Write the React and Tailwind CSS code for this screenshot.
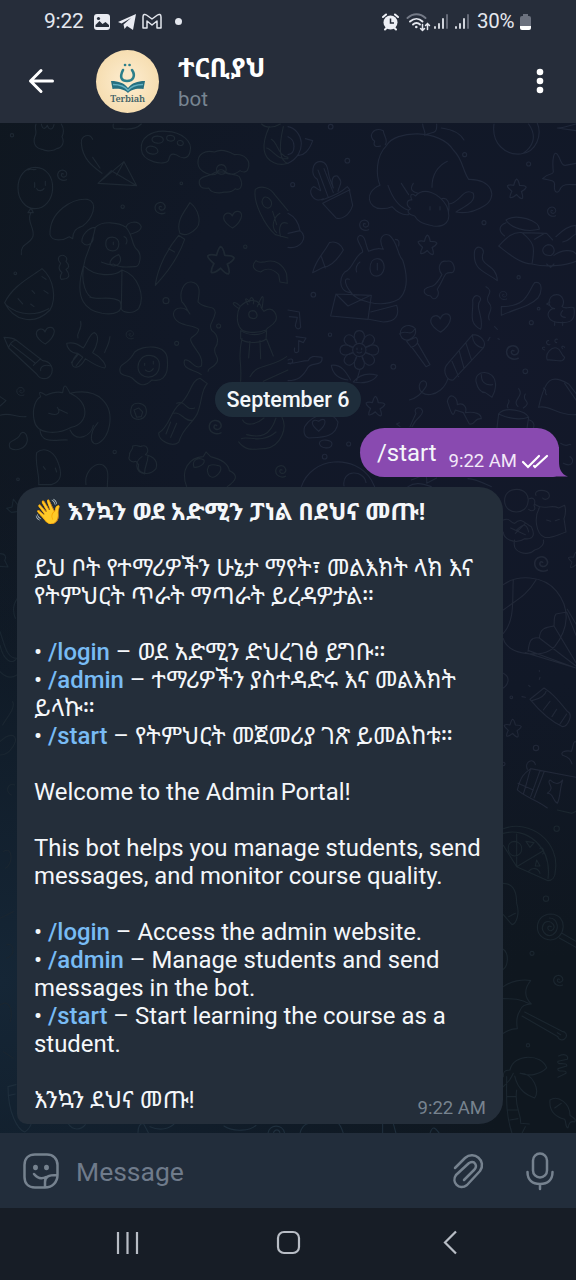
import React from "react";

const spiral = "M0 2c-5-4-9 4-3 8 8 4 17-4 12-13-6-11-24-8-26 6-1 14 14 22 27 16";
const star = "M0-26 Q5-24 8-9 Q24-9 26-4 Q24 2 13 8 Q19 24 15 27 Q9 27 0 16 Q-13 27-18 24 Q-19 18-13 7 Q-26-4-25-8 Q-20-12-8-9 Q-4-24 0-26Z";
const heart = "M0 24C-12 18-28 4-27-8c2-14 20-18 26-4 6-18 26-18 28-2 0 14-14 30-27 38Z";

function Doodles() {
  return (
    <svg className="absolute inset-0 size-full" viewBox="0 123 576 1010" fill="none" strokeWidth="3.4" strokeLinecap="round" strokeLinejoin="round">
      <g transform="translate(0 120) scale(.3333)" className="stroke-[#1e2833]">
        <path d="M108 12c-6 14 4 22-2 34-10 24 2 40 20 42 14 8 38 4 44-2 18-4 24-20 16-36 8-16 4-28-2-38M124 12c4 20 14 14 18 4 4 14 16 16 20-2M340 12c-4 20 10 14 22 14 30 4 50-2 62-14M785 12c14 14 40 10 56 0" />
        <path d="M106 142c35 0 53 30 52 64-2 34-24 60-52 60-32 0-52-30-52-62 0-34 20-62 52-62ZM84 150c10-6 16 2 24-2M104 188v14M136 184v12M110 206c4 8 16 8 22 0M92 266l-8 12h16l-6-12M92 280c-14 26 16 46 6 72-10 22-38 18-34 52" />
        <path d="M278 58c-8-20-36-12-34 12 4 46 30 66 62 90M278 112l22 32M294 190 372 125l38 72ZM294 190l40-38 76 45M372 125l-22 40" />
        <path d="M424 88c-4-34 30-58 76-54 44 2 80 30 70 62-6 24-26 20-42 8-18-6-20 6-22 16-10 20-80 6-82-32ZM456 58c2-14 34-12 34 2-2 14-34 12-34-2ZM438 88c6-16 34-10 36 6 0 12-32 12-36-6ZM500 54c0-12 24-10 24 2 0 10-24 10-24-2ZM532 68c0-10 18-8 18 2s-18 8-18-2Z" />
        <path d="M594 130c-2-30 22-40 50-34 24-14 52 4 60 8 30-4 50 20 40 42-2 12-16 12-24 6-14 12-30 12-42 8-6-14-24-14-26-2-10 16-58-2-58-28ZM598 182c6-16 22-8 50-26h28c14 10 30 4 42 14 16 28 0 44-12 36-16 18-32 6-42 12-18 2-32-2-38-14-22 4-30-6-28-22ZM664 134c14 0 18 16 12 24s-24 6-26-6c-2-10 4-18 14-18Z" />
        <path d="M850 20c-16 70-10 104 14 110M808 20c-26 56-20 94 14 108 20 10 42 2 42 2M814 58c20 10 20 50 50 54M800 84c20 6 30 36 64 32" />
        <path d="M766 208c18-14 46-4 58 16l40 48M766 208c-8 40 30 110 60 136l38 10M792 232c-16 18 8 42 20 28 10-18-10-32-20-28ZM818 274l12 40M840 280c-20 12-28 42-10 58M862 310c-20-8-28 12-20 40" />
        <path d="M150 344c-2-70 68-110 112-106 36 10 14 60-14 80-22 8-30 18-30 38l-10-6c-16 10-50 18-58-6Z" />
        <path d="M286 322c20-20 70-16 92 0 22 24 16 52 32 66 18 14 10 54-6 52-22 0-42 6-64-8-14 6-24-2-36-6M378 322c4-16 36-24 46-2-2 18-22 18-32 22M286 322c-20 0-42 24-40 44 14 18 34 6 34-16M286 322c-6 34-14 50-30 94-20 70 4 120 30 118M250 440c-30 100 10 132 56 140 40 6 66-4 54-36-30-20-64-2-90-12M254 440c30 30 90 30 112 10 50 16 70 80 50 116-20 20-50 10-52 0l2-116M330 352c24-4 28 14 26 24-2 24-34 20-38 2-2-14 2-24 12-26ZM340 366v8M372 350c8 2 12 12 6 22M356 404c-26 10-34 32-16 34 20 0 28-20 16-34Z" />
        <path d="M14 548c24-50 74-74 112-102 36 30 44 90 24 124-50 50-110 30-136-22ZM20 556c40 34 90 30 126 10M126 470l12 8M96 512l8 8M132 512l12 8M54 536l14 16M92 552l10 8" />
        <path d="M466 496c6-50 36-110 70-150l18 12c-18 52-52 100-88 138ZM540 340c-14-36 14-66 30-92 28 22 34 60 20 76-12 14-34 26-50 16ZM506 386l18 10M180 408c10-6 26 4 18 16 14 14 6 22 0 24 16 20 8 30-14 30-6-6-2-14 2-20-14-12-8-20-4-28-10-10-8-18-2-22Z" />
        <path d="M768 422c6 8 16 4 26 4 32-10 56 8 66 36l2 28-22-4-4-22c-20-20-40-20-54-8-20-4-30-18-14-34ZM546 546c-10-30 6-62 28-60 36 4 20 50 20 60 20 24 50 6 52 32-6 30-22 34-10 54 20 12 20 38 10 50-10 20 16 30 4 46-12 20-24 12-26 26M546 546c12 10 18 30 24 36-12-24-46-24-50 0 6 40 60 30 76 46-2 24-32 18-22 38 8 20 38 42 30 72-20 14-32-24-50-18-10 30 30 28 50 44" />
        <path d="M12 652c20 0 28 2 36 8l80 62c24 2 36 24 24 44-10 14-32 14-42-4L26 684ZM48 660c-14 4-20 14-22 24M100 736l22-20M122 752c-2-12 12-20 30-14M34 674l72 56M242 604c6 28-14 30-8 50M330 650c-4 30-10 28-16 48M200 670c22-4 32 2 50 14 12-16 20-46 34-46 18 10 4 46-6 60 24 12 46 40 36 46-26-4-44-20-58-28-18 34-40 30-40 14 4-20 10-22 18-30-24 0-34-20-34-30ZM214 728l22-26 12 10-20 26" />
        <path d="M360 754c-4-26 22-16 44-58 24-22 96-24 98 22 6 62-24 66-46 62-30 32-50 2-60-6-12-10-34-4-36-20ZM446 706c22 0 34 14 32 32-2 44-62 44-64 4 0-20 14-36 32-36ZM434 730v6M460 724v8M436 750c10 8 18 6 24-4" />
        <path d="M122 830c-6-14-6-18 16-4 22-10 36-12 50-8 4-28 8-26 22 2 60 26 58 90 4 102-44 24-106 22-112-24-6-30 4-60 20-68ZM210 820c88-20 130 36 118 98-10 50-50 70-54 38 0-30 14-40 20-48M120 930c4 44 48 28 82 30M210 930c20 40 64 18 70-14M146 880c30 10 36-4 26-18M176 868l26 12" />
        <path d="M600 775c-28 4-30 60-64 80-24 20-28 66-60 84 0 24 40 44 60 28 14-46 38-52 56-86 16-40 10-70 30-90ZM530 850c28-10 26 24 54 14M522 880c20-8 34 30 58 20M512 906l-14 36M530 910l-18 42" />
        <path d="M720 560c30-30 60-20 64 4l8 10c30-20 44 16 34 30-10 16-20 14-28 26-28 12-68 8-76-4-14-20-12-48-2-66ZM718 566c-30-16-18-26 0-10M744 554c-16-28 0-16 4-8 4-24 16-10 12 6M772 560c20-50 20-30 14 6M722 632c24 16 60 16 78 0l-2 26c-20 14-64 12-76-2ZM726 656c-14 60 0 60-4 128M800 658l20 50M750 664l-4 50M780 662l2 54M758 572c14 0 20 24 2 24-18-2-18-22-2-24ZM750 770c20-40 60-24 110-60M790 784l74-34" />
        <path d="M716 966c26 34 54 18 80 20 50-8 66-66 50-94M728 900c10 20 40 14 64-6M740 944c40 10 70 6 88-50M724 956c20-10 60 18 104-20M110 998c20-18 48-6 60 20 20 44 14 68-16 76h-38c4-26-12-60-6-96ZM130 1040l6 8M166 1044l4 12M258 1094c-6-40 30-70 52-58 20 14 12 40 12 64M30 984c-10-26 20-20 28-36 8-20 24-10 24 14-4 24-34 34-52 22ZM0 830l18 12-18 16M0 886c30-10 50 8 78 4" />
        <path d="M396 858c8-12 30-10 40 2 8 20 0 34-16 38-24 2-34-16-24-40ZM402 870l14-6 12 12-4 14-14 2ZM388 1010c-2-22 14-18 10-32 18-6 20 6 28 0 16-4 24 16 10 26 30 6 38 24 32 42-20 24-60 16-52-12l-8-10c-16 6-24-8-20-14ZM426 1010c-20 12-24 46 8 52M444 1008c0 20-10 30-10 50M560 1100c-20-50 8-88 50-90l8-14 14 14c40 10 54 28 56 42 30 14 20 30-6 48M582 1042c-8-22 14-32 30-22 4 10-12 24-30 22ZM626 1038c16-10 30 2 34 0 10 14-12 34-22 34-14-2-20-20-12-34Z" />
        <path d={heart} transform="translate(136 648)" /><path d={heart} transform="translate(698 300)" />
        <path d={star} transform="translate(662 420) scale(1.55)" />
        {[[190, 160, 1], [484, 258, 1.1], [392, 640, .8], [64, 810, .8], [650, 914, 1.3], [846, 1048, 1.1]].map(([x, y, s]) => <path key={x} d={spiral} transform={`translate(${x} ${y}) scale(${s})`} />)}
        {[[498, 542, 9], [530, 670, 6], [656, 618, 6], [736, 380, 5], [368, 260, 5], [36, 46, 5], [46, 460, 4], [344, 996, 5], [54, 1078, 4], [544, 190, 4]].map(([x, y, r]) => <circle key={x} cx={x} cy={y} r={r} />)}
      </g>
      <g transform="translate(288 120) scale(.3333)" className="stroke-[#20283a]">
        <path d="M0 20c46 10 60 80 0 110M52 56l22 6c-10 30-28 46-44 44M0 50c24 10 24 50 0 54M618 12c-8 60 36 94 80 90 50-6 64-60 50-92M722 12c28 40 10 70-16 88M808 24l56 8M808 24c20 0 36-8 56-12" />
        <path d="M296 76c24-46 160-50 200 14 30 30 26 58 46 88 70-2 90 54 46 80-32 20-64 22-84 18 32-20 60-30 52-56-30-20-40 30-74 32M296 76c-34 34-32 90-20 120-50 20-36 70 4 70 20 0 32-6 32-6 18 20 34 26 50 24M278 78c-14 4-24 0-18-14-22-16-4-44 26-32 0 14 16 28 6 42M404 12c0 16 10 20 6 34 20-14 38 2 36-34M460 24c30 4 56 14 68 36M300 196c14 40 36 66 60 74M340 190l22 34M376 190c-14 20 0 26 14 30M432 202c0-30 10-60 46-78M382 228c26-28 70-10 94 30 20 50-10 64-40 60-38-8-48-16-56-30-20-4-26-16-12-22-18-14-10-28 4-26-10-20 4-20 10-12ZM426 260v10M456 260v10M462 236c16-4 24 10 20 38" />
        <path d="M106 236c-30 16-50-24-30-36 8 0 12 10 22 12l-10-34c-22-14-16-54 10-54 26 4 20 34 28 54l10 26c-8-24-2-38 12-36 20 20 6 26 2 46M104 250l80-40 10 46c-10 30-32 44-50 38ZM102 240c18-6 58-22 76-40l8 10M90 150l30 80M108 146l28 72M0 280c20 10 32 28 36 52 28 20 0 56-36 50M0 340l36-8" />
        <path d="M74 458c10-40 28-50 50-90 22-8 38 10 42 22-18 30-38 50-60 52ZM100 410l12 34M224 396c0-18-28-40-8-50 18 0 16 32 26 48 16-8 32-10 44-6-18-34 0-50 18-42 26 20 24 60 40 74 20 60 10 100-12 118-60 32-130-2-144-20-44-4-32-60-10-66 20-16 22-44 46-56ZM268 416c14 0 22 14 20 30-4 30-42 30-42 0 0-20 10-30 22-30ZM268 430v20M216 426c-10 6-14 20-10 30M192 520c-20-20-28-50-8-42M144 522l-16 66 112 10 10-72ZM144 522l36 36 68-32M248 576l78-20c10 30-4 50-40 50l-44-8M322 358c12 0 12 10 10 20" />
        <path d="M410 508c18-16 24 6 52-44-16-20-6-44 14-40 22-6 30 30 16 34-26-2-18 8-44 50 10 20-10 40-20 20-16-2-22-10-18-20ZM560 392c8-20 28-8 26 6-16 44 40 30 42 84-36-28-76-30-68-90ZM554 540c6-20 24-14 24 0-20 24 12 50 0 88-40-20-20-52-24-88ZM594 500c30 16-10 30 10 50 16 20-10 30 0 50M640 560c80 0 80-46 100-72 26-6 22 30 10 46-28 28-62 30-110 52ZM480 730l74-86c22 0 44 20 32 40l-90 96c-20 4-36-30-16-50ZM554 644c-2 20 10 36 32 40M534 670l16 48M514 694l14 50M492 724l20 46M480 776c-20 60-90 60-86 20 4-20 28-16 20 4-12 20-32 36-50 40M600 662l6-10M620 620l8 8M630 656l4 2" />
        <path d="M342 654c-20-30 22-50 40-28 6 24-22 44-40 28ZM334 642c20-16 32 10 46-14M356 664l14 18c20-6 24-20 14-30ZM372 682l42 58 12-6-38-66M564 784c-4-36 54-36 58 4 4 10-2 20-2 26l-8 18-20-14c-16 0-24-16-28-34ZM580 764c0 20 10 34 34 30M478 844c6-30 30-14 30 10 20-8 30 10 24 24 30-4 48 4 48 18-24-2-16 20-36 16l-18-34-24-8c-6 22-10 18-24-26Z" />
        <g transform="translate(214 690)">
          {[0, 45, 90, 135, 180, 225, 270, 315].map((a) => <path key={a} d="M-9-20C-22-46-12-58 0-58S22-46 9-20" transform={`rotate(${a})`} />)}
          <circle r="20" /><path d="M-7-6v5M7-6v5M-7 6q7 6 14 0M2 58l-10 34M-84 46c30-4 44 20 58 44M-84 46c4 26 20 40 50 44M54 76c-36-10-56 0-72 20 30 6 60 0 72-20" />
        </g>
        <path d="M0 570l34 6 4 46c-8 10-16 2-16-6l6-24L4 590M24 650l30 4-8 14-14-6v32c-10 10-16 0-12-10M0 730c30 0 40-8 60-8 10-20 28-10 42-10 4 28-30 14-42 30-16 30-32 40-60 40M0 720c20-10 16 10 6 12" />
        <path d="M764 176c20-20 30-10 32-20-4-40 2-70 14-50 10 14 8 30 22 30l32-6M764 176c24 6 34 4 36 16-4 30 12 30 18 12 10-14 26-10 46-10M632 378c20-20 40-44 70-40 36 30 40 40 30 94-36 0-74-34-100-54ZM654 300c30-20 100 0 100 28-40 10-86-4-100-28ZM654 308c-26 10-20 30-4 40M702 338l74 2 18 20M740 358l30-18M804 350c20-20 44-34 60-34v26c-20 10-16 20-40 24M780 374c20 0 24 24 10 32-30 4-34-24-10-32ZM798 406c20-16 56-20 66-4M732 432c40 10 100 6 132-8M776 432l12 10 10-10" />
        <path d="M800 566c-26-4-20-42 6-42 18 0 26 22 16 36 14 10 28-4 36 4 6 40-14 44-38 44-46 0-48-34-26-42ZM786 546l-10 6 12 6M824 572c-10 10-6 20 8 20M800 606v10M824 606v10M778 720c-8-20 14-40 28-36 14 4 10 16 24 28-4 20-24 6-52 8ZM770 690c-10-2-8-10 0-8M786 674c-14 2-12-14-4-12M806 668c-8 0-6-14 2-10M824 686c-6-4 0-12 6-4M752 862c20-90 40-100 90-70l22 28M752 862c30-10 60 28 112 22M766 804c16 10 0 14 10 20M830 790l34 50" />
        <path d="M632 882c20-24 80-10 90 10l-6 40M632 882l-6 50M632 882c30 14 60 20 90 10M660 864c-8-8 8-16 2-24M690 860c-20-20 20-30 2-54M706 864c30-20-8-20 6-42M724 900c16 4 16 20 10 28M366 920l18-40c-10-16 14-24 20-6-2 20-14 10-32 46M336 920l-10-8 8-4M50 920c24-40 84-48 100-14-4 50-56 46-88 48-14-4-16-20-12-34ZM92 934c-30-24-20-40 0-30 20-16 30 4 0 30ZM94 970c4-16 38-10 38 2-2 18-36 14-38-2ZM40 1100c30-90 160-100 210-20l10 20M168 1098c-8-50 60-50 66-10M370 1080c30-10 50-30 46 10l30-16M360 1100c20-14 40-10 70 0M540 1076c20 0 40 10 70 24M818 970c20 14 24 0 30 4M826 1030c30 16 34-14 20-20" />
        <path d={heart} transform="translate(458 610) scale(1.1)" />
        {[[686, 206, 1.1], [418, 374, 1.1], [262, 858, 1.1]].map(([x, y, s]) => <path key={x} d={star} transform={`translate(${x} ${y}) scale(${s})`} />)}
        {[[232, 310, 1], [794, 270, .9], [648, 522, .8], [678, 690, 1.3]].map(([x, y, s]) => <path key={x} d={spiral} transform={`translate(${x} ${y}) scale(${s})`} />)}
        {[[128, 20, 7], [178, 122, 7], [14, 194, 6], [76, 524, 7], [126, 644, 5], [722, 132, 6], [588, 308, 6], [316, 740, 7], [712, 754, 7], [182, 972, 6], [110, 1010, 7], [730, 608, 6], [752, 566, 4], [692, 472, 5], [530, 104, 6]].map(([x, y, r]) => <circle key={x} cx={x} cy={y} r={r} />)}
      </g>
      <g transform="translate(490 480) scale(.3333)" className="stroke-[#212838]">
        <path d="M80 28c24 0 38 18 34 38-4 40-66 40-70 0-2-24 14-38 36-38ZM138 46c-10-20 40-20 40 0 2 10-14 16-20 8M136 74c30 20 44-4 70 10l18-8c6 20 2 30-2 40l6 40c-30 10-44 20-64 16-26-10-34-60-14-92M118 56c14-6 20 6 14 20 8 16-6 20-16 12M40 120c20-10 20 10 34 10 20-20 30 0 50 10 10 20 10 40-20 36-30 20-64 0-64-20M74 180c-10 40 40 50 60 30 20-4 30-20 26-30M170 120l12 4M196 122l12-4M80 150c20-20 30-20 36 6M62 144l44 20M106 130l-30 30" />
        <path d="M40 314c40-30 120-30 160 20 40 50 38 110-6 166-20 22-50 24-88 20-34-4-60-20-66-44M70 300c-4 60 6 120-30 160M138 300c-30 50-60 60-98 90M230 396l-32 6c-8 10-4 20-6 36-24 4-42 6-44 36-26-4-30 10-34 40M106 518l152 46M116 512l142 52M148 474l110 84M192 438l66 110M230 396l28 70M232 388l26 44" />
        <path d="M120 658l42-34c20 14 30 20 70 70 20 10 0 46-14 46-44-20-80-60-98-82ZM126 662c20-4 40-14 44-32M160 690l20-26M186 710l14-22M210 732l20-30M96 650l10 2M148 598l2-6M116 616l4 4M148 572v2M258 786c-10-6-8 20-14 28-20-4-34 4-26 12 20 6 24 14 28 26M112 868c-10-24 20-36 24-14M82 930c10-40 20-50 40-64l136 26M82 930c20 20 60 30 90 54M122 866c-10 30-10 40-22 76M150 872l-28 78M162 876l-30 78M84 910l46 20M180 900c-14 10 20 20-8 40 20 0 14 20 30 30 10-20 6-40 16-70-10 14-24 14-38 0ZM40 580c20 10 18 30 0 44" />
        <path d={spiral} transform="translate(158 244) scale(1.4)" />
        <path d={star} transform="translate(68 744)" /><path d={star} transform="translate(258 240) scale(.9)" />
        <circle cx="138" cy="804" r="8" /><circle cx="64" cy="652" r="4" /><circle cx="40" cy="852" r="5" />
      </g>
      <g transform="translate(490 810) scale(.3333)" className="stroke-[#1b262f]">
        <path d="M40 56c80-30 170 40 156 126 0 20-10 30-22 30l-94-42-40-64M40 70c70-20 146 40 134 136M80 72v98l80-48M74 94c30 4 26 44 0 44-26-4-26-44 0-44ZM108 94l24 4-12 14ZM140 150l10 18h-14ZM150 116c6-10 16 10 8 16M116 184c10-14 30-10 34 6M40 220c34 0 40 30 40 60 10 30 0 60-14 64l-26-30M56 320l20-10M202 0l44 10 12-6" />
        <path d="M182 312c54 2 46 76 0 78-54-2-52-76 0-78ZM184 350c-14-8-14 14 0 12 20-8 0-36-20-24-18 20 4 46 24 36 24-16 14-50-10-50M216 370l42 24M208 384l50 28M40 418c18 14 14 50 0 60" />
        <path d="M40 530c20-16 60-24 82-18-20 24-20 50 2 70-20 0-30 6-34 20-14 20-10 40-8 54-20 0-30 6-42 14M40 566c30 0 50 0 80 16M104 606l112 58c10 0 16 10 12 18-8 14-24 6-24-2l-108-62M202 668l10 6" />
        <path d="M60 780c10-50 96-50 110-6-20 20-50 26-80 16 40 0 60 50 44 74-20-8-50-20-60-66M60 780c-20 0-20 10-20 20M40 830c20-20 20-20 30-40M50 800c0 60-4 110 16 170M80 840c-8 50 14 70 12 100l26 2M52 860h24M54 900h28M60 930l24-4M96 970l10-20" />
        <path d="M206 738c20-10 30 0 26 10l-28 6c-6 14 30 0 26 14l-26 8c-4 14 28 0 24 14l-24 12M180 870c24-16 60 10 60 46 10 8 20 10 14 20-12-4-18 4-20 18-10-4-4-18-10-26-40-10-46-36-44-58ZM194 894l20-14" />
        <path d={spiral} transform="translate(208 506)" /><circle cx="200" cy="56" r="8" /><circle cx="168" cy="266" r="8" /><circle cx="126" cy="430" r="6" /><circle cx="114" cy="706" r="5" />
      </g>
      <g transform="translate(0 1080) scale(.3333)" className="stroke-[#1e2e3c]">
        <path d="M24 20l24-6M24 20c0 80 30 130 50 136 14-8 20-20 22-36M28 46l18-4M204 130c14 24 40 20 52 4M414 160c0-20 6-30 16-30l16 30M450 140c30 14 60 6 74-10M672 138c30 20 80 14 96-2M804 160c4-28 44-30 50 0M820 160c4-14 18-14 20 0M900 160c10-40 40-30 70-34 40-10 50 0 60 34M1148 130v30M1180 130l8 30M1290 160c10-30 20-10 28 0" />
      </g>
      <g transform="translate(0 485) scale(.3333)" className="stroke-[#1a2631]">
        <path d="M20 70l16-4 4-24 12 16M20 70l14 12 18-2M0 206c16 0 20 10 14 20l10 20-24-2M52 340c-14 20-14 40-6 60M0 440c14 40 20 80 50 80M0 480c10 50 40 60 50 40M0 560c20 20 36 20 50 10M38 650c10 20-20 50-30 70M0 770c30-30 50-20 46 0-6 20-24 40-46 40M10 1100c30-20 30 40 6 50M0 1300l40-20M20 1380c20-10 30 30 0 40M0 1560c30-20 40 20 30 50M10 1700l30 20M44 900c-20-10-30 20-10 30" />
      </g>
    </svg>
  );
}

function Line({ children, className = "" }) {
  return <div className={"h-7 whitespace-pre " + className}>{children}</div>;
}
function Cmd({ children }) {
  return <span className="font-medium text-[#78bbf4]">{children}</span>;
}
function Signal() {
  return (
    <svg width="16" height="17" viewBox="0 0 16 17" strokeWidth="1.8" strokeLinecap="round">
      <path d="M2 15v-1M6 15v-4M10 15V6" stroke="#e4e7ee" /><path d="M14 2v13" stroke="#6b717e" />
    </svg>
  );
}

export default function App() {
  return (
    <div className="flex h-[1280px] w-[576px] flex-col overflow-hidden bg-[#171d26] font-[Roboto,'Noto_Sans_Ethiopic','Noto_Sans',sans-serif] text-[#f4f7fa]">
      <header className="h-[123px] shrink-0 bg-[#262d3a]">
        <div className="flex h-[43px] items-center pl-11 text-[21px] text-[#e4e7ee]">
          <span className="w-[49px] whitespace-nowrap tracking-[-0.2px]">9:22</span>
          <svg width="18" height="18" viewBox="0 0 18 18"><rect x="1" y="1" width="16" height="16" rx="3" fill="#e9ebf2" /><circle cx="5.5" cy="5.5" r="1.6" fill="#262d3a" /><path d="M2.5 14v-2l4-4 3 3 3-2 3.500 3v2Z" fill="#262d3a" /></svg>
          <svg className="ml-1.5" width="20" height="18" viewBox="0 0 20 18"><path d="M1 9 19 1 16 17 10 13 7.500 16 6.500 11.500 14 5 4.500 10.500Z" fill="#e9ebf2" /></svg>
          <svg className="ml-[5px]" width="20" height="17" viewBox="0 0 20 17" fill="none" stroke="#e4e7ee" strokeWidth="1.5" strokeLinejoin="round"><path d="M1 15V4c0-3 2-3 3.500-2L10 6l5.500-4C17 1 19 1 19 4v11h-4V8l-5 4-5-4v7Z" /></svg>
          <span className="ml-[13px] size-[7px] rounded-full bg-[#e4e7ee]" />
          <svg className="ml-[200px]" width="17" height="18" viewBox="0 0 17 18"><circle cx="8.500" cy="9.500" r="7" fill="#edeff5" /><path d="M1 4 4 1.500M16 4l-3-2.500M3 16.500l2-2M14 16.500l-2-2" stroke="#edeff5" strokeWidth="2" strokeLinecap="round" /><path d="M8.500 5.500v4.500H12" stroke="#262d3a" strokeWidth="1.500" fill="none" /></svg>
          <svg className="ml-[7px]" width="25" height="20" viewBox="0 0 25 20" fill="none" strokeLinecap="round"><path d="M1.500 6C7 1 14 1 19.500 6" stroke="#747a87" strokeWidth="2" /><path d="M4 9.500C8 6 13 6 16.500 9.500M7 12.500c2-2 5-2 7 0" stroke="#e4e7ee" strokeWidth="1.900" /><circle cx="10.300" cy="15" r="1.300" fill="#e4e7ee" /><path d="M16.500 12.500v6M14.500 16.500l2 2 2-2M21.500 17.500v-6M19.500 13.500l2-2 2 2" stroke="#e4e7ee" strokeWidth="1.500" /></svg>
          <span className="ml-0.5 flex gap-[5px]"><Signal /><Signal /></span>
          <span className="ml-[7px] w-[41px] whitespace-nowrap text-[20.5px] tracking-[-0.3px]">30%</span>
          <svg className="ml-px" width="13" height="18" viewBox="0 0 13 18"><path d="M4 1h5v2h1q2 0 2 2v8H1V5q0-2 2-2h1Z" fill="#6b717e" /><path d="M1 13h11v2q0 2-2 2H3q-2 0-2-2Z" fill="#fff" /></svg>
        </div>
        <div className="flex h-[80px] items-center pb-1">
          <svg className="ml-[28px]" width="27" height="26" viewBox="0 0 27 26" fill="none" stroke="#fff" strokeWidth="3" strokeLinecap="round" strokeLinejoin="round"><path d="M24.500 13H2.500M13 2.500 2.500 13l10.500 10.500" /></svg>
          <div className="ml-[41px] flex size-[63px] flex-col items-center rounded-full bg-[radial-gradient(circle,#fbe9c8_20%,#f3d7a4_100%)]">
            <svg className="mt-[11px] shrink-0" width="36" height="32" viewBox="0 0 36 32"><path d="M13 9c-4 8-1 11 4 11 6 0 9-5 5-11M15 4h.1M19.500 4h.1" fill="none" stroke="#2c7f8a" strokeWidth="2.600" strokeLinecap="round" /><path d="M1 20c8 0 13 2 17 7 4-5 9-7 17-7l-1.500 8c-8-1-12.500 1-15.500 4-3-3-7.500-5-15.500-4Z" fill="#256f80" /><path d="M3 23.500c7 0 12 2 15 6 3-4 8-6 15-6" stroke="#65b0c0" strokeWidth="1.300" fill="none" /></svg>
            <span className="whitespace-nowrap font-['Noto_Serif','Liberation_Serif',serif] text-[9.3px] font-semibold leading-[11px] tracking-[-0.2px] text-[#426166]">Terbiah</span>
          </div>
          <div className="ml-[19px] flex h-[63px] w-[340px] flex-col pt-[2px]">
            <span className="h-[33px] whitespace-nowrap text-[27px] font-bold leading-[33px] text-white">ተርቢያህ</span>
            <span className="h-7 text-[20.5px] leading-7 text-[#788592]">bot</span>
          </div>
          <svg className="ml-[18px]" width="8" height="26" viewBox="0 0 8 26" fill="#fff"><circle cx="4" cy="4" r="3.300" /><circle cx="4" cy="13" r="3.300" /><circle cx="4" cy="22" r="3.300" /></svg>
        </div>
      </header>

      <main className="relative flex h-[1010px] shrink-0 flex-col bg-[radial-gradient(circle_at_85%_25%,#13182a_0%,#111827_35%,transparent_65%),radial-gradient(circle_at_0%_85%,#152636_0%,#101b27_30%,transparent_50%)] bg-[#0f171f]">
        <Doodles />
        <div className="relative mt-[259px] flex h-[35px] w-[146px] items-center justify-center self-center rounded-full bg-[#20303d]/90 pt-0.5 text-[21.500px] font-medium">
          <span className="whitespace-nowrap">September 6</span>
        </div>
        <div className="relative mr-[8px] mt-[11px] flex h-[49px] w-[208px] self-end">
          <svg className="absolute bottom-0 right-0" width="30" height="30" viewBox="0 0 30 30"><path d="M0 0H21v14c0 8 2 13 9 15.500H0Z" fill="#894ab0" /></svg>
          <div className="relative flex h-[49px] w-[199px] rounded-l-[24.500px] rounded-br-[6px] rounded-tr-[22px] bg-[#894ab0] pl-[17px]">
            <span className="w-[71.500px] whitespace-nowrap text-[23.900px] leading-[50px]">/start</span>
            <span className="whitespace-nowrap pt-1.5 text-[18.500px] leading-[54px] text-[#f3e8f9]">9:22 AM</span>
            <svg className="ml-[4px] mt-[25px]" width="28" height="16" viewBox="0 0 28 16" fill="none" stroke="#fff" strokeWidth="2.200" strokeLinecap="round"><path d="M2 9l5 5L18 3M13 13l1 1L26 3" /></svg>
          </div>
        </div>
        <div className="relative ml-[17px] mt-[10px] h-[637px] w-[486px] rounded-tl-[22px] rounded-tr-[24px] rounded-br-[24px] rounded-bl-[10px] bg-[#242e3a] pl-[17px] pt-[11px] text-[23.900px] leading-7">
          <Line className="font-bold"><span className="inline-block w-[33.500px] -translate-x-px font-['Noto_Color_Emoji'] text-[24.500px] font-normal">👋</span>እንኳን ወደ አድሚን ፓነል በደህና መጡ!</Line>
          <Line />
          <Line>ይህ ቦት የተማሪዎችን ሁኔታ ማየት፣ መልእክት ላክ እና</Line>
          <Line>የትምህርት ጥራት ማጣራት ይረዳዎታል።</Line>
          <Line />
          <Line>• <Cmd>/login</Cmd> – ወደ አድሚን ድህረገፅ ይግቡ።</Line>
          <Line>• <Cmd>/admin</Cmd> – ተማሪዎችን ያስተዳድሩ እና መልእክት</Line>
          <Line>ይላኩ።</Line>
          <Line>• <Cmd>/start</Cmd> – የትምህርት መጀመሪያ ገጽ ይመልከቱ።</Line>
          <Line />
          <Line>Welcome to the Admin Portal!</Line>
          <Line />
          <Line>This bot helps you manage students, send</Line>
          <Line>messages, and monitor course quality.</Line>
          <Line />
          <Line>• <Cmd>/login</Cmd> – Access the admin website.</Line>
          <Line>• <Cmd>/admin</Cmd> – Manage students and send</Line>
          <Line>messages in the bot.</Line>
          <Line>• <Cmd>/start</Cmd> – Start learning the course as a</Line>
          <Line>student.</Line>
          <Line />
          <div className="flex h-7 justify-between whitespace-pre pr-[17px]"><span>እንኳን ደህና መጡ!</span><span className="pt-2 text-[18.500px] text-[#77838f]">9:22 AM</span></div>
        </div>
      </main>

      <div className="flex h-[75px] shrink-0 items-center bg-[#222d3b]">
        <svg className="ml-[22px] mt-px" width="38" height="38" viewBox="0 0 38 38" fill="none" stroke="#76828f" strokeWidth="2.500" strokeLinecap="round" strokeLinejoin="round"><path d="M23 35.500H13C6 35.500 2.500 31 2.500 25V13C2.500 6 7 2.500 13 2.500h12c6 0 10.500 4 10.500 10.500v10c0 7-5 12.500-12.500 12.500ZM23 35V30c0-5 3-7 12-7M12 22c4 5 8 5 12 3" /><ellipse cx="13.500" cy="15.500" rx="1.200" ry="1.500" fill="#76828f" /><ellipse cx="24.500" cy="15.500" rx="1.200" ry="1.500" fill="#76828f" /></svg>
        <span className="ml-4 w-[376px] pt-[3px] text-[26.500px] text-[#6f7b8b]">Message</span>
        <svg className="mt-px" width="34" height="38" viewBox="0 0 34 38" fill="none" stroke="#76828f" strokeWidth="2.500" strokeLinecap="round" strokeLinejoin="round"><path d="M3 16 13 6C22-2 35 9 28 19L15 33C7 39-1 30 4 23L17 11c6-3 9 3 5 7L12 28" /></svg>
        <svg className="ml-[39px] mt-px" width="30" height="40" viewBox="0 0 30 40" fill="none" stroke="#76828f" strokeWidth="2.500" strokeLinecap="round"><rect x="8" y="2.500" width="14" height="24" rx="7" /><path d="M2.500 21c0 8 5 12 12.500 12s12.500-4 12.500-12M15 33v5" /></svg>
      </div>
      <nav className="flex h-[72px] shrink-0 items-center pb-[3px] text-[#b8bdc5]">
        <svg className="ml-[115px]" width="25" height="24" viewBox="0 0 25 24" stroke="currentColor" strokeWidth="2.200"><path d="M3 1v22M12.500 1v22M22 1v22" /></svg>
        <svg className="ml-[136px]" width="25" height="25" viewBox="0 0 25 25" fill="none" stroke="currentColor" strokeWidth="2.200"><rect x="2" y="2" width="21" height="21" rx="6" /></svg>
        <svg className="ml-[141px]" width="16" height="25" viewBox="0 0 16 25" fill="none" stroke="currentColor" strokeWidth="2.200"><path d="M14 1.500 3 12.500 14 23.500" /></svg>
      </nav>
    </div>
  );
}
